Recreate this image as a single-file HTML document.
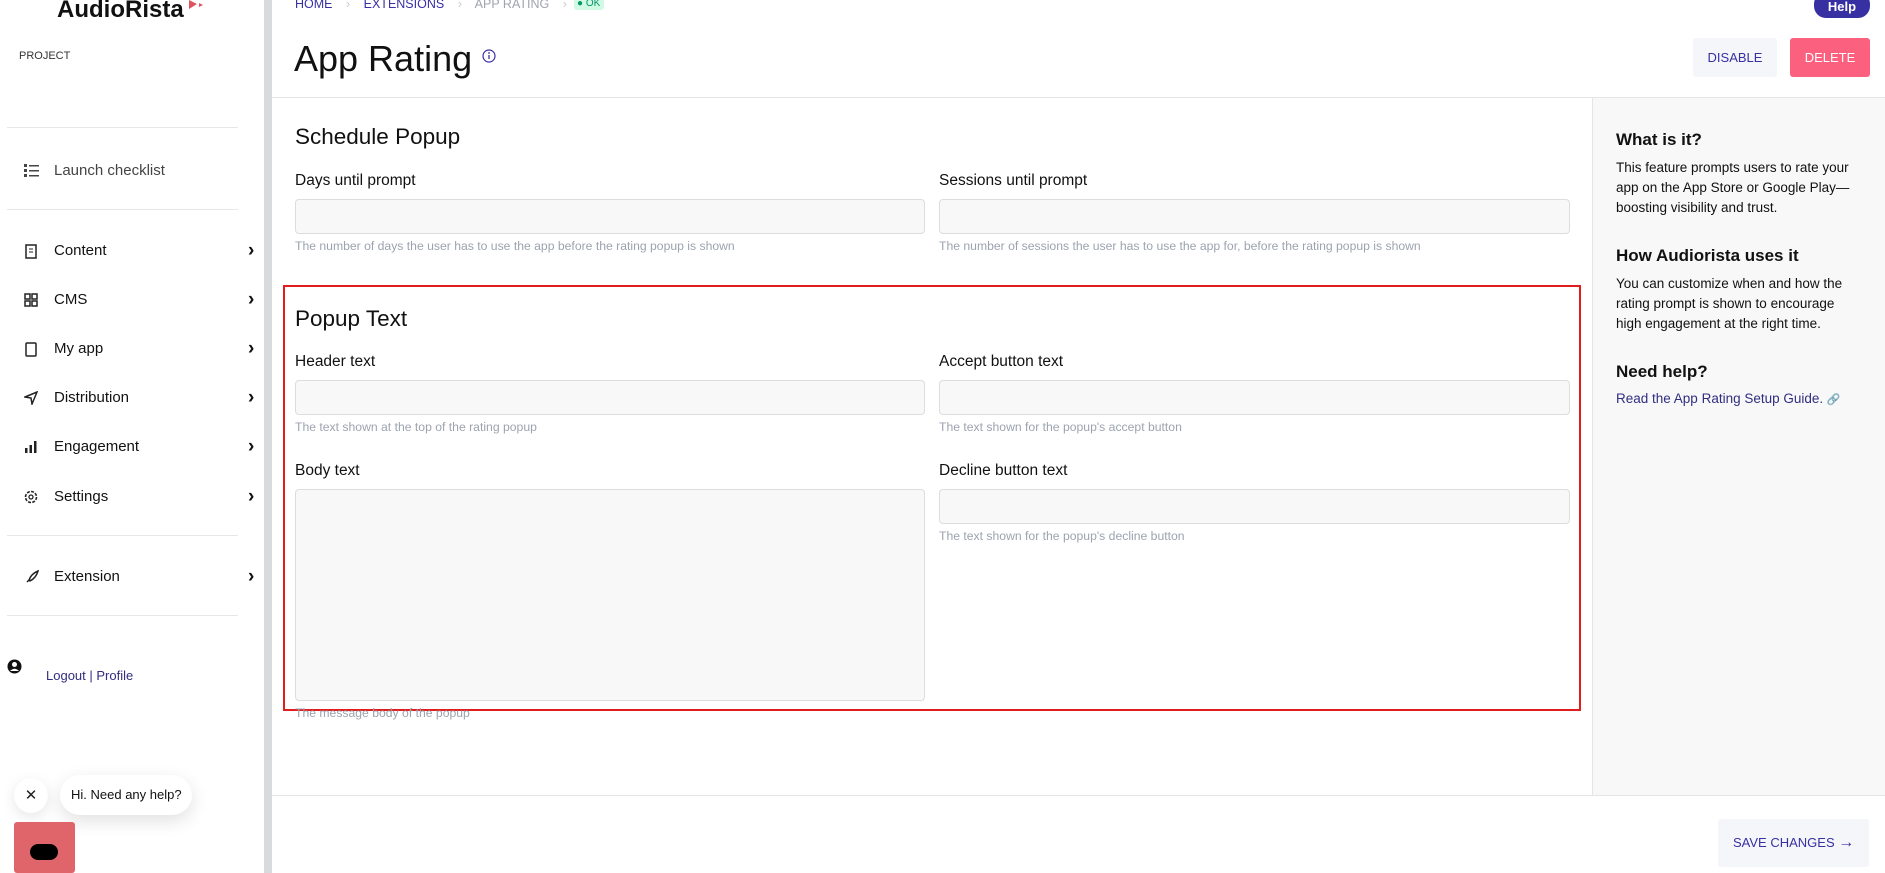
<!DOCTYPE html>
<html><head><meta charset="utf-8"><style>
*{box-sizing:border-box;margin:0;padding:0}
body{width:1885px;height:873px;overflow:hidden;background:#fff;font-family:"Liberation Sans",sans-serif;color:#111;position:relative}
.a{position:absolute;white-space:nowrap}
.hr{position:absolute;left:7px;width:231px;height:1px;background:#e5e7eb}
.nav{position:absolute;left:24px;font-size:15px;color:#111;width:240px}
.nav svg{position:absolute;left:0;top:2px}
.nav span{position:absolute;left:30px}
.nav .ch{position:absolute;left:224px;top:-2px;font-size:19px;font-weight:bold}
.lbl{position:absolute;font-size:15.5px;color:#111}
.inp{position:absolute;background:#f8f8f8;border:1px solid #ddd;border-radius:4px}
.hint{position:absolute;font-size:12.2px;color:#9ca3af;white-space:nowrap}
.rh{position:absolute;left:1616px;font-size:17px;font-weight:bold;color:#111}
.rp{position:absolute;left:1616px;font-size:13.5px;line-height:20px;color:#111;width:238px}
</style></head><body>
<!-- sidebar -->
<div class="a" style="left:57px;top:-4px;font-size:24px;font-weight:bold;color:#111">AudioRista</div>
<svg class="a" style="left:189px;top:0" width="16" height="10"><polygon points="0,0 8,4 0,9" fill="#e05260"/><polygon points="10,3 14,5 10,7" fill="#e05260"/></svg>
<div class="a" style="left:19px;top:50px;font-size:11px;color:#333">PROJECT</div>
<div class="hr" style="top:127px"></div>
<div class="nav" style="top:162px"><svg width="16" height="14" viewBox="0 0 16 14"><g fill="#444"><rect x="0" y="0" width="3" height="3"/><rect x="0" y="5" width="3" height="3"/><rect x="0" y="10" width="3" height="3"/><rect x="5" y="1" width="10" height="1.5"/><rect x="5" y="6" width="10" height="1.5"/><rect x="5" y="11" width="10" height="1.5"/></g></svg><span style="color:#444">Launch checklist</span></div>
<div class="hr" style="top:209px"></div>
<div class="nav" style="top:242px"><svg width="14" height="15"><rect x="2" y="1" width="10" height="13" fill="none" stroke="#222" stroke-width="1.5"/><path d="M5 5h4M5 8h4" stroke="#222"/></svg><span>Content</span><span class="ch">›</span></div>
<div class="nav" style="top:291px"><svg width="14" height="14"><g fill="none" stroke="#222" stroke-width="1.5"><rect x="1" y="1" width="5" height="5"/><rect x="8" y="1" width="5" height="5"/><rect x="1" y="8" width="5" height="5"/><rect x="8" y="8" width="5" height="5"/></g></svg><span>CMS</span><span class="ch">›</span></div>
<div class="nav" style="top:340px"><svg width="14" height="15"><rect x="2" y="1" width="10" height="13" rx="1" fill="none" stroke="#222" stroke-width="1.5"/></svg><span>My app</span><span class="ch">›</span></div>
<div class="nav" style="top:389px"><svg width="14" height="14"><path d="M1 6L13 1L8 13L7 7Z" fill="none" stroke="#222" stroke-width="1.5"/></svg><span>Distribution</span><span class="ch">›</span></div>
<div class="nav" style="top:438px"><svg width="14" height="14"><g fill="#222"><rect x="1" y="8" width="2.5" height="5"/><rect x="5.5" y="5" width="2.5" height="8"/><rect x="10" y="1" width="2.5" height="12"/></g></svg><span>Engagement</span><span class="ch">›</span></div>
<div class="nav" style="top:488px"><svg width="14" height="14"><circle cx="7" cy="7" r="5.5" fill="none" stroke="#222" stroke-width="1.6" stroke-dasharray="3 1.3"/><circle cx="7" cy="7" r="2" fill="none" stroke="#222" stroke-width="1.3"/></svg><span>Settings</span><span class="ch">›</span></div>
<div class="hr" style="top:535px"></div>
<div class="nav" style="top:568px"><svg width="15" height="15"><path d="M3 12L6 9M5 10Q7 4 14 1Q12 8 6 11Z" fill="none" stroke="#222" stroke-width="1.5"/></svg><span>Extension</span><span class="ch">›</span></div>
<div class="hr" style="top:615px"></div>
<svg class="a" style="left:7px;top:659px" width="15" height="15"><circle cx="7.5" cy="7.5" r="7" fill="#111"/><circle cx="7.5" cy="5.5" r="2.5" fill="#fff"/><path d="M3 12Q7.5 7.5 12 12" fill="#fff"/></svg>
<div class="a" style="left:46px;top:668px;font-size:13px;color:#312e81">Logout | Profile</div>
<div class="a" style="left:14px;top:778px;width:34px;height:35px;border-radius:50%;background:#fff;box-shadow:0 4px 14px rgba(0,0,0,.1);font-size:15px;text-align:center;line-height:35px;color:#222">✕</div>
<div class="a" style="left:60px;top:775px;width:132px;height:40px;border-radius:20px;background:#fff;box-shadow:0 6px 18px rgba(0,0,0,.12);font-size:13px;line-height:40px;padding-left:11px;color:#111">Hi. Need any help?</div>
<div class="a" style="left:14px;top:822px;width:61px;height:51px;background:#e0656b;border-radius:3px"><div style="position:absolute;left:16px;top:22px;width:28px;height:16px;background:#000;border-radius:8px"></div></div>
<div class="a" style="left:264px;top:0;width:8px;height:873px;background:#d8dadd"></div>
<!-- header -->
<div class="a" style="left:295px;top:-3px;font-size:12.5px;color:#3730a3">HOME <span style="color:#ccc;margin:0 10px">›</span> EXTENSIONS <span style="color:#ccc;margin:0 10px">›</span> <span style="color:#a0a4ae">APP RATING</span> <span style="color:#ccc;margin:0 10px">›</span></div>
<div class="a" style="left:574px;top:-2px;height:12px;width:30px;background:#d1fae5;border-radius:3px;font-size:10px;color:#059669;line-height:12px;padding-left:3px">● OK</div>
<div class="a" style="left:1814px;top:-8px;width:56px;height:26px;background:#3730a3;border-radius:12px;color:#fff;font-size:13px;font-weight:bold;text-align:center;line-height:22px;padding-top:4px">Help</div>
<div class="a" style="left:294px;top:38px;font-size:36px;color:#111">App Rating</div>
<svg class="a" style="left:482px;top:49px" width="14" height="14"><circle cx="7" cy="7" r="6" fill="none" stroke="#3730a3" stroke-width="1.2"/><path d="M7 6v4" stroke="#3730a3" stroke-width="1.3"/><circle cx="7" cy="4" r=".9" fill="#3730a3"/></svg>
<div class="a" style="left:1693px;top:38px;width:84px;height:39px;background:#f5f6fa;border-radius:3px;color:#3730a3;font-size:13px;text-align:center;line-height:39px">DISABLE</div>
<div class="a" style="left:1790px;top:38px;width:80px;height:39px;background:#fb607f;border-radius:3px;color:#fff;font-size:13px;text-align:center;line-height:39px">DELETE</div>
<div class="a" style="left:272px;top:97px;width:1613px;height:1px;background:#e5e5e5"></div>
<!-- right panel -->
<div class="a" style="left:1592px;top:98px;width:293px;height:697px;background:#f8f8f8;border-left:1px solid #e5e5e5"></div>
<div class="rh" style="top:130px">What is it?</div>
<div class="rp" style="top:158px">This feature prompts users to rate your app on the App Store or Google Play—boosting visibility and trust.</div>
<div class="rh" style="top:246px">How Audiorista uses it</div>
<div class="rp" style="top:274px">You can customize when and how the rating prompt is shown to encourage high engagement at the right time.</div>
<div class="rh" style="top:362px">Need help?</div>
<div class="rp" style="top:389px;color:#312e81">Read the App Rating Setup Guide. <span style="color:#bbb;font-size:11px">🔗</span></div>
<!-- form -->
<div class="a" style="left:295px;top:124px;font-size:22.5px;color:#111">Schedule Popup</div>
<div class="lbl" style="left:295px;top:172px">Days until prompt</div>
<div class="lbl" style="left:939px;top:172px">Sessions until prompt</div>
<div class="inp" style="left:295px;top:199px;width:630px;height:35px"></div>
<div class="inp" style="left:939px;top:199px;width:631px;height:35px"></div>
<div class="hint" style="left:295px;top:239px">The number of days the user has to use the app before the rating popup is shown</div>
<div class="hint" style="left:939px;top:239px">The number of sessions the user has to use the app for, before the rating popup is shown</div>
<div class="a" style="left:283px;top:285px;width:1298px;height:426px;border:2px solid #e21d1d"></div>
<div class="a" style="left:295px;top:306px;font-size:22.5px;color:#111">Popup Text</div>
<div class="lbl" style="left:295px;top:353px">Header text</div>
<div class="lbl" style="left:939px;top:353px">Accept button text</div>
<div class="inp" style="left:295px;top:380px;width:630px;height:35px"></div>
<div class="inp" style="left:939px;top:380px;width:631px;height:35px"></div>
<div class="hint" style="left:295px;top:420px">The text shown at the top of the rating popup</div>
<div class="hint" style="left:939px;top:420px">The text shown for the popup's accept button</div>
<div class="lbl" style="left:295px;top:462px">Body text</div>
<div class="lbl" style="left:939px;top:462px">Decline button text</div>
<div class="inp" style="left:295px;top:489px;width:630px;height:212px"></div>
<div class="inp" style="left:939px;top:489px;width:631px;height:35px"></div>
<div class="hint" style="left:939px;top:529px">The text shown for the popup's decline button</div>
<div class="hint" style="left:295px;top:706px">The message body of the popup</div>
<!-- footer -->
<div class="a" style="left:272px;top:795px;width:1613px;height:1px;background:#e5e5e5"></div>
<div class="a" style="left:1718px;top:819px;width:151px;height:48px;background:#f5f6fa;border-radius:3px;color:#3730a3;font-size:13px;line-height:48px;padding-left:15px">SAVE CHANGES <span style="font-size:16px">→</span></div>
</body></html>
